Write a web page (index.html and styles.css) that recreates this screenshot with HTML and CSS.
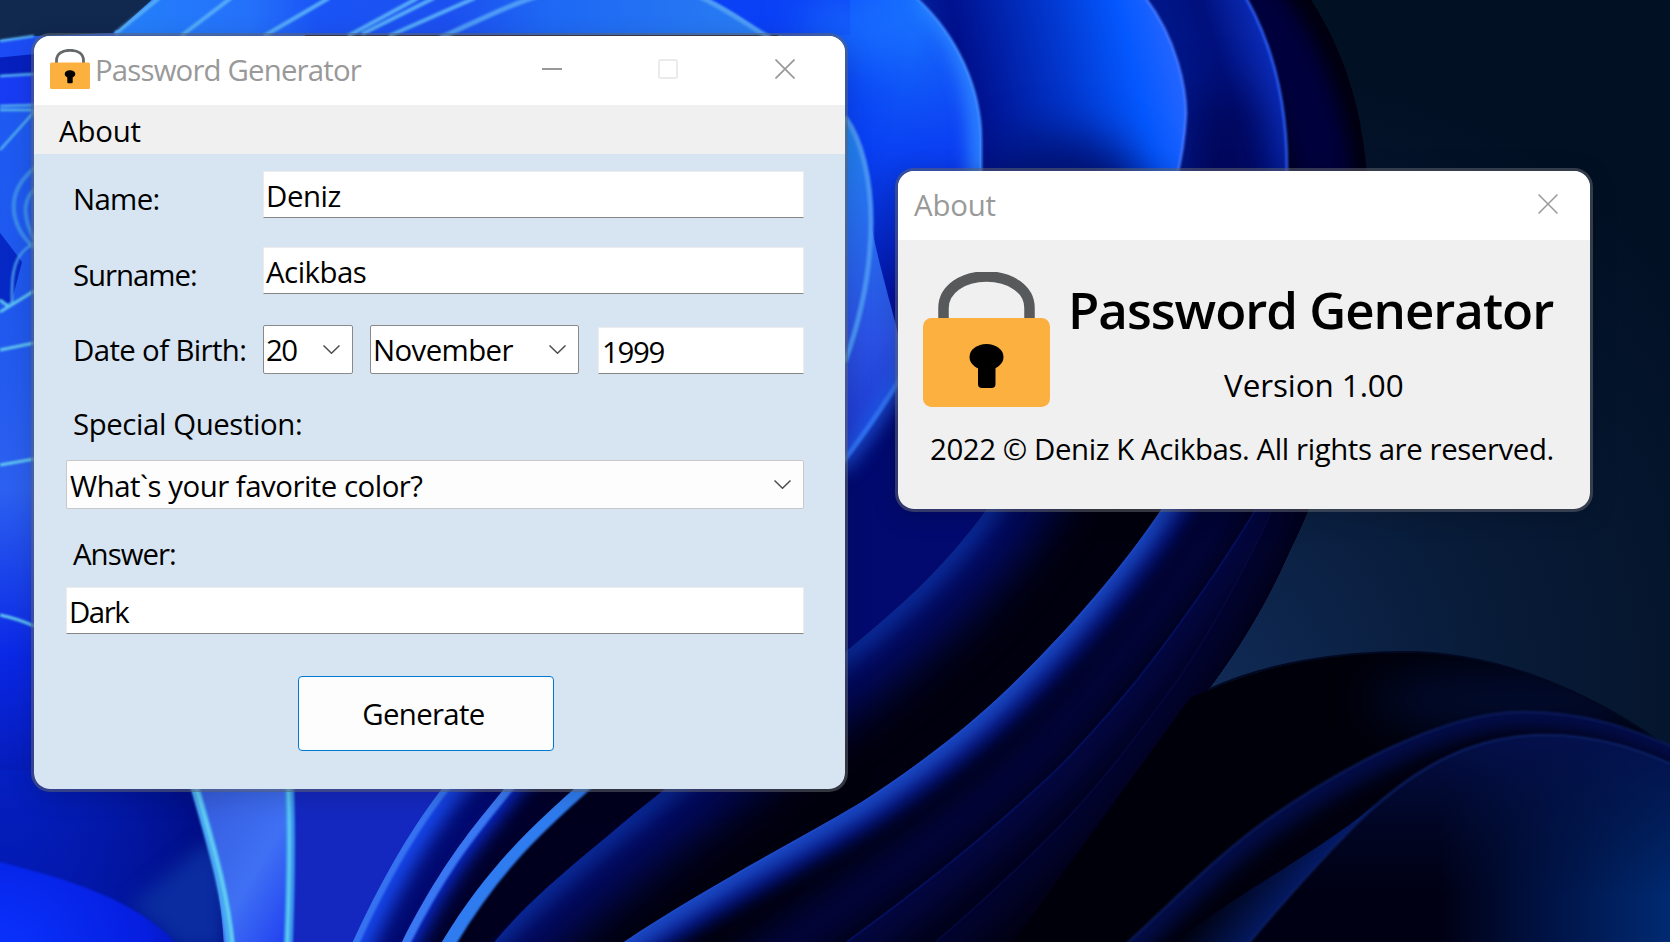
FILE: index.html
```html
<!DOCTYPE html>
<html lang="en">
<head>
<meta charset="utf-8">
<title>Password Generator</title>
<link rel="stylesheet" href="styles.css">
</head>
<body>
<main class="desktop">
  <svg class="wallpaper" viewBox="0 0 1670 942" preserveAspectRatio="none" aria-hidden="true">
    <defs>
      <filter id="b1" filterUnits="userSpaceOnUse" x="-200" y="-200" width="2100" height="1400" color-interpolation-filters="sRGB"><feGaussianBlur stdDeviation="1"/></filter>
      <filter id="b8" filterUnits="userSpaceOnUse" x="-200" y="-200" width="2100" height="1400" color-interpolation-filters="sRGB"><feGaussianBlur stdDeviation="9"/></filter>
      <filter id="b20" filterUnits="userSpaceOnUse" x="-200" y="-200" width="2100" height="1400" color-interpolation-filters="sRGB"><feGaussianBlur stdDeviation="22"/></filter>
      <radialGradient id="sky" gradientUnits="userSpaceOnUse" cx="1210" cy="680" r="620"><stop offset="0" stop-color="#102a55"/><stop offset=".45" stop-color="#081b38"/><stop offset="1" stop-color="#021024"/></radialGradient>
      <linearGradient id="gTop3" gradientUnits="userSpaceOnUse" x1="700" y1="0" x2="985" y2="60"><stop offset="0" stop-color="#0836f0"/><stop offset=".45" stop-color="#0a4cff"/><stop offset=".75" stop-color="#1a78ff"/><stop offset="1" stop-color="#1f6bff"/></linearGradient>
      <linearGradient id="gShade" x1="0" y1="0" x2="0" y2="1"><stop offset="0" stop-color="#0430ee" stop-opacity="0"/><stop offset=".4" stop-color="#0430ee" stop-opacity=".75"/><stop offset=".75" stop-color="#0212a0"/><stop offset="1" stop-color="#020870"/></linearGradient>
      <linearGradient id="gTop2" gradientUnits="userSpaceOnUse" x1="975" y1="110" x2="1187" y2="60"><stop offset="0" stop-color="#00108c"/><stop offset=".45" stop-color="#0238d0"/><stop offset=".75" stop-color="#0458ff"/><stop offset="1" stop-color="#2a68ff"/></linearGradient>
      <linearGradient id="gTop1" gradientUnits="userSpaceOnUse" x1="1160" y1="100" x2="1290" y2="60"><stop offset="0" stop-color="#001a90"/><stop offset=".5" stop-color="#00107c"/><stop offset=".85" stop-color="#0a2ab4"/><stop offset="1" stop-color="#1e4ce6"/></linearGradient>
      <linearGradient id="gP4" x1="0" y1="0" x2="0" y2="1"><stop offset="0" stop-color="#1c90e8"/><stop offset=".3" stop-color="#2672f0"/><stop offset=".6" stop-color="#2a52e4"/><stop offset="1" stop-color="#1426c0"/></linearGradient>
      <linearGradient id="gLeft" x1="0" y1="0" x2="0" y2="1"><stop offset="0" stop-color="#1e5cf4"/><stop offset=".3" stop-color="#1f58ee"/><stop offset=".5" stop-color="#2c60f0"/><stop offset=".68" stop-color="#0a28e6"/><stop offset=".85" stop-color="#0418ac"/><stop offset="1" stop-color="#020c90"/></linearGradient>
      <linearGradient id="gCorner" gradientUnits="userSpaceOnUse" x1="20" y1="0" x2="230" y2="0"><stop offset="0" stop-color="#0422c8" stop-opacity=".5"/><stop offset="1" stop-color="#000a78"/></linearGradient>
      <radialGradient id="gDisk" gradientUnits="userSpaceOnUse" cx="0" cy="960" r="210"><stop offset="0" stop-color="#0a34ff"/><stop offset=".7" stop-color="#061ee0"/><stop offset="1" stop-color="#0414a8"/></radialGradient>
      <linearGradient id="gBandA" x1="0" y1="0" x2="1" y2="1"><stop offset="0" stop-color="#3458d8"/><stop offset=".6" stop-color="#3f70f4"/><stop offset="1" stop-color="#1e3cf0"/></linearGradient>
      <linearGradient id="gBandB" gradientUnits="userSpaceOnUse" x1="288" y1="0" x2="440" y2="60"><stop offset="0" stop-color="#2860dc"/><stop offset=".4" stop-color="#1c3cdc"/><stop offset="1" stop-color="#1428c0"/></linearGradient>
      <linearGradient id="gTopL" gradientUnits="userSpaceOnUse" x1="120" y1="0" x2="780" y2="0"><stop offset="0" stop-color="#2480fa"/><stop offset=".2" stop-color="#2470fa"/><stop offset=".3" stop-color="#1a54f6"/><stop offset=".5" stop-color="#1c50f0"/><stop offset=".65" stop-color="#1e68f4"/><stop offset="1" stop-color="#2a7ef2"/></linearGradient>
      <linearGradient id="gRight" gradientUnits="userSpaceOnUse" x1="1440" y1="0" x2="1670" y2="0"><stop offset="0" stop-color="#000014"/><stop offset=".5" stop-color="#001448"/><stop offset="1" stop-color="#002a72"/></linearGradient>
      <linearGradient id="gFade" x1="0" y1="0" x2="0" y2="1"><stop offset="0" stop-color="#04104c" stop-opacity=".95"/><stop offset=".75" stop-color="#000c30" stop-opacity="0"/></linearGradient>
      <linearGradient id="gSliver" gradientUnits="userSpaceOnUse" x1="1225" y1="885" x2="1275" y2="925"><stop offset="0" stop-color="#000210"/><stop offset="1" stop-color="#041c6c"/></linearGradient>

      <path id="outer" d="M1311 0C1350 60 1368 130 1368 210C1368 340 1330 470 1290 550C1266 605 1238 650 1208 690L1010 960H-20V-20H1300Z"/>
      <path id="t1" d="M1245 -4C1276 50 1287 110 1287 170V330H840V-20H1240Z"/>
      <path id="t2" d="M1144 -4C1178 40 1186 90 1186 114Q1184 150 1176 180V330H840V-20H1140Z"/>
      <path id="t3" d="M914 -4C958 35 981 90 981 140V400H780V-20H900Z"/>
      <path id="p4" d="M845 117C862 140 871 180 871 222C876 255 890 300 900 342V520H780V60Z"/>
      <path id="e0" d="M912 360C890 395 868 430 838 468V960H1300V360Z"/>
      <path id="e1" d="M1080 370L1000 490C953 560 905 603 845 652C790 696 730 742 664 790C600 840 540 890 480 950L380 1100H1700V370Z"/>
      <path id="e2" d="M1230 370L1174 490C1130 560 1065 635 999 697C955 738 905 774 860 803C780 850 700 890 612 950L480 1100H1700V370Z"/>
      <path id="e3" d="M1310 370L1266 490C1235 545 1180 625 1136 680C1100 723 1070 757 1041 783C980 840 920 888 840 946L700 1100H1700V370Z"/>
      <path id="e4" d="M1330 370L1262 530C1220 615 1190 665 1147 720C1115 763 1085 800 1052 833C1010 875 970 912 925 950L800 1100H1700V370Z"/>
      <path id="s1" d="M449 780C420 815 385 870 349 950L330 1050H900V780Z"/>
      <path id="s2" d="M511 780C480 820 445 855 398 950L370 1050H900V780Z"/>
      <path id="s3" d="M584 780C545 815 490 860 437 950L400 1050H900V780Z"/>
      <path id="r0" d="M1190 698C1263 664 1335 652 1406 652C1500 652 1600 695 1680 757V960H1000Z"/>
      <path id="rA" d="M1700 760C1630 725 1580 712 1523 712C1440 712 1330 775 1263 823C1215 858 1180 895 1120 950L1000 1100H1900V860Z"/>
      <path id="rB" d="M1680 768C1640 750 1600 735 1544 735C1470 735 1410 770 1353 827C1315 866 1280 905 1243 950H1680Z"/>
      <clipPath id="c1"><use href="#e1"/></clipPath><clipPath id="c2"><use href="#e2"/></clipPath>
      <clipPath id="c3"><use href="#e3"/></clipPath><clipPath id="c4"><use href="#e4"/></clipPath>
      <clipPath id="cs1"><use href="#s1"/></clipPath><clipPath id="cs2"><use href="#s2"/></clipPath><clipPath id="cs3"><use href="#s3"/></clipPath>
      <clipPath id="cO"><use href="#outer"/></clipPath><clipPath id="cA"><use href="#rA"/></clipPath><clipPath id="cR"><use href="#r0"/></clipPath>
      <clipPath id="ct3"><use href="#t3"/></clipPath><clipPath id="ct2"><use href="#t2"/></clipPath><clipPath id="ct1"><use href="#t1"/></clipPath>
    </defs>

    <rect width="1670" height="942" fill="url(#sky)"/>
    <!-- outer flower silhouette -->
    <use href="#outer" fill="#00000f"/>
    <g clip-path="url(#cO)">
      <!-- upper right petals -->
      <path d="M1240 -10C1290 40 1320 120 1325 200" stroke="#00003c" stroke-width="60" fill="none" filter="url(#b8)"/>
      <use href="#t1" fill="url(#gTop1)"/>
      <g clip-path="url(#ct1)"><ellipse cx="1225" cy="165" rx="34" ry="80" fill="#000658" filter="url(#b20)"/></g>
      <use href="#t1" fill="none" stroke="#2c5cf0" stroke-width="2.5" filter="url(#b1)"/>
      <use href="#t2" fill="url(#gTop2)"/>
      <g clip-path="url(#ct2)"><ellipse cx="1060" cy="195" rx="85" ry="60" fill="#001478" filter="url(#b20)"/></g>
      <use href="#t2" fill="none" stroke="#4478ff" stroke-width="2.5" filter="url(#b1)"/>
      <use href="#t3" fill="url(#gTop3)"/>
      <use href="#t3" fill="url(#gShade)"/>
      <g clip-path="url(#ct3)"><path d="M925 -4C966 35 985 90 980 180" stroke="#2f86ff" stroke-width="22" fill="none" filter="url(#b8)"/></g>
      <use href="#t3" fill="none" stroke="#3f8cff" stroke-width="2.5" filter="url(#b1)"/>

      <!-- lower sweeping petals -->
      <path d="M-10 340H920V960H-10Z" fill="#0414a0"/>
      <use href="#p4" fill="url(#gP4)"/>
      <path d="M845 117C862 140 871 180 871 222C871 270 860 320 845 362" stroke="#4a94f4" stroke-width="5" fill="none" filter="url(#b1)"/>
      <use href="#e0" fill="#020a70"/>
      <path d="M912 360C890 395 868 430 838 468" stroke="#1f5ae6" stroke-width="14" fill="none" filter="url(#b8)"/>
      <path d="M912 360C890 395 868 430 838 468" stroke="#2f6ff0" stroke-width="5" fill="none" filter="url(#b1)"/>
      <use href="#e1" fill="#00000e"/>
      <g clip-path="url(#c1)"><use href="#e1" fill="none" stroke="#020a62" stroke-width="110" filter="url(#b20)"/><use href="#e1" fill="none" stroke="#0a2a96" stroke-width="26" filter="url(#b8)"/></g>
      <use href="#e2" fill="#000008"/>
      <g clip-path="url(#c2)"><use href="#e2" fill="none" stroke="#04127c" stroke-width="60" filter="url(#b8)"/><use href="#e2" fill="none" stroke="#1c4cc8" stroke-width="26" filter="url(#b8)"/><use href="#e2" fill="none" stroke="#2350c8" stroke-width="2" filter="url(#b1)"/></g>
      <g clip-path="url(#c2)"><path d="M1280 370L1235 490C1200 560 1110 675 1030 760C960 825 880 880 780 950L640 1060" fill="none" stroke="#010548" stroke-width="44" filter="url(#b20)"/></g>
      <use href="#e3" fill="#000016"/>
      <g clip-path="url(#c3)"><use href="#e3" fill="none" stroke="#03084c" stroke-width="46" filter="url(#b20)"/><use href="#e3" fill="none" stroke="#0a1878" stroke-width="2" filter="url(#b1)"/></g>
      <use href="#e4" fill="#000010"/>
      <g clip-path="url(#c4)"><use href="#e4" fill="none" stroke="#030436" stroke-width="50" filter="url(#b20)"/><use href="#e4" fill="none" stroke="#080e4c" stroke-width="2" filter="url(#b1)"/></g>
    </g>
    <!-- right dark petals -->
    <use href="#r0" fill="#00000a"/>
    <g clip-path="url(#cR)"><ellipse cx="1520" cy="700" rx="150" ry="34" fill="#010a2c" filter="url(#b20)"/></g>
    <path d="M1208 690C1263 664 1335 652 1406 652C1500 652 1600 695 1680 757" fill="none" stroke="#020820" stroke-width="2"/>
    <use href="#rA" fill="#00000e"/>
    <g clip-path="url(#cA)"><use href="#rA" fill="none" stroke="#020c48" stroke-width="34" filter="url(#b8)"/></g>
    <path d="M1700 760C1630 725 1580 712 1523 712C1440 712 1330 775 1263 823C1215 858 1180 895 1120 950" fill="none" stroke="#0a1a58" stroke-width="2.5" filter="url(#b1)"/>
    <path d="M1375 805C1310 858 1240 890 1165 950H1260Z" fill="url(#gSliver)"/>
    <use href="#rB" fill="url(#gRight)"/>
    <use href="#rB" fill="url(#gFade)"/>
    <path d="M1680 768C1640 750 1600 735 1544 735C1470 735 1410 770 1353 827C1315 866 1280 905 1243 950" fill="none" stroke="#0b1e60" stroke-width="2.5" filter="url(#b1)"/>

    <!-- petals below the main window -->
    <rect x="-5" y="30" width="310" height="920" fill="url(#gLeft)"/>
    <rect x="-5" y="770" width="320" height="180" fill="url(#gCorner)"/>
    <path d="M130 905L208 840L225 870V950H180Z" fill="#0a2ca0" filter="url(#b8)"/>
    <path d="M0 862C70 880 140 900 182 950H-10V862Z" fill="url(#gDisk)" filter="url(#b1)"/>
    <path d="M188 780C205 830 222 880 224 950H290V780Z" fill="url(#gBandA)"/>
    <path d="M288 780C292 840 288 900 286 950H370L470 780Z" fill="url(#gBandB)"/>
    <path d="M193 780C210 840 226 890 231 950" fill="none" stroke="#48a8f4" stroke-width="9" filter="url(#b1)"/>
    <path d="M194 780C211 840 228 890 233 950" fill="none" stroke="#66d0f0" stroke-width="3" filter="url(#b1)"/>
    <path d="M289 780C292 840 290 900 288 950" fill="none" stroke="#3a98ee" stroke-width="9" filter="url(#b1)"/>
    <path d="M288 780C291 840 289 900 287 950" fill="none" stroke="#62ccf0" stroke-width="3" filter="url(#b1)"/>
    <g clip-path="url(#cs1)"><path d="M440 770H680C610 842 540 880 480 960H340Z" fill="#020a70"/><path d="M470 760L449 780C420 815 385 870 349 950L335 990" fill="none" stroke="#1646ea" stroke-width="40" filter="url(#b8)"/><path d="M452 780C423 815 388 870 352 950" fill="none" stroke="#3672f0" stroke-width="8" filter="url(#b1)"/></g>
    <g clip-path="url(#cs2)"><path d="M500 770H680C610 842 540 880 480 960H390Z" fill="#00002c"/><path d="M530 760L511 780C480 820 445 855 398 950L380 990" fill="none" stroke="#0a2cd8" stroke-width="30" filter="url(#b8)"/><path d="M514 780C483 820 448 855 401 950" fill="none" stroke="#3a78f2" stroke-width="11" filter="url(#b1)"/></g>
    <g clip-path="url(#cs3)"><path d="M570 780H676C610 832 545 885 474 956H430Z" fill="#00001e"/><path d="M588 780C549 815 494 860 443 950" fill="none" stroke="#2f7cf0" stroke-width="17" filter="url(#b1)"/></g>

    <!-- left edge folds -->
    <path d="M-5 -5H157L113 33L34 36L0 40L-5 45Z" fill="#11284f"/>
    <path d="M-5 42L35 36V74L-5 77Z" fill="#1c4cf6"/><path d="M-5 58L35 54V74L-5 76Z" fill="#0620c0"/>
    <path d="M-5 76L35 74V106L-5 107Z" fill="#183cf4"/>
    <path d="M-5 226L22 262L12 300L5 305L-5 292Z" fill="#0628c4"/>
    <g fill="none" stroke="#56b4f0" stroke-width="2.500" filter="url(#b1)">
      <path d="M0 41L34 36M0 76L34 74M0 106L34 105M0 110H34M0 150L34 112"/>
      <path d="M40 164C20 178 12 195 14 212C16 228 24 238 34 248M40 186C28 192 24 204 26 216C28 228 32 236 36 242" stroke="#3c8cec" stroke-width="4"/>
      <path d="M36 242C20 250 12 262 12 290V304" stroke="#4aa0f0"/>
      <path d="M0 312L34 291M0 300L8 306M0 350L34 343M0 465L34 459M0 615C15 618 25 622 34 626" stroke="#62c8f0" stroke-width="3"/>
    </g>

    <!-- strip above the main window -->
    <path d="M157 -5L113 35H770L724 -5Z" fill="url(#gTopL)"/>
    <path d="M700 -5C735 12 750 24 766 35H850V-5Z" fill="#0a40f6"/>
    <path d="M810 -5H925L905 60H800Z" fill="#1f7cff" filter="url(#b20)" opacity=".5"/>
    <g fill="none" stroke="#56acf8" stroke-width="4" filter="url(#b1)">
      <path d="M159 -2L115 34M231 -2L181 36M329 -2L264 36M418 -2L348 36M434 -2L362 34M475 -2L389 36"/>
      <path d="M440 38C480 20 510 4 545 -6M690 -8C730 10 745 24 770 38" stroke="#4e9cf6" stroke-width="5"/>
    </g>
  </svg>

  <section class="window window-main">
    <header class="titlebar">
      <svg class="app-icon" viewBox="0 0 40 40" aria-hidden="true">
        <path d="M6.500 15V11.500C6.500 5 12 1.300 20 1.300S33.500 5 33.500 11.500V15" fill="none" stroke="#65686a" stroke-width="2.800"/>
        <rect y="13.500" width="40" height="26.500" rx="1.500" fill="#fbb040"/>
        <ellipse cx="20" cy="25" rx="5.300" ry="3.800"/><rect x="17.300" y="26" width="5.400" height="8.300" rx="1"/>
      </svg>
      <h1 class="title t-title">Password Generator</h1>
      <div class="controls">
        <svg class="ctl" viewBox="0 0 20 20"><path d="M0 10H20" stroke="#999" stroke-width="2"/></svg>
        <svg class="ctl" viewBox="0 0 20 20"><rect x="1" y="1" width="18" height="18" rx="1.500" fill="none" stroke="#ebebeb" stroke-width="2"/></svg>
        <svg class="ctl" viewBox="0 0 20 20"><path d="M.5 .5L19.500 19.500M19.500 .5L.5 19.500" stroke="#999" stroke-width="1.700"/></svg>
      </div>
    </header>
    <nav class="menubar"><span class="t-about">About</span></nav>
    <form class="form">
      <div class="row row-name"><label class="t-name">Name:</label><div class="textbox t-deniz">Deniz</div></div>
      <div class="row row-surname"><label class="t-surname">Surname:</label><div class="textbox t-acikbas">Acikbas</div></div>
      <div class="row row-birth">
        <label class="t-dob">Date of Birth:</label>
        <div class="combo combo-day t-day">20<svg class="chev" viewBox="0 0 17 9"><path d="M.5 .5L8.500 8.200L16.500 .5"/></svg></div>
        <div class="combo combo-month t-month">November<svg class="chev" viewBox="0 0 17 9"><path d="M.5 .5L8.500 8.200L16.500 .5"/></svg></div>
        <div class="textbox textbox-year t-year">1999</div>
      </div>
      <label class="line-label t-question">Special Question:</label>
      <div class="combo combo-question"><span class="t-what">What`s your favorite color?</span><svg class="chev" viewBox="0 0 17 9"><path d="M.5 .5L8.500 8.200L16.500 .5"/></svg></div>
      <label class="line-label answer-label t-answer">Answer:</label>
      <div class="textbox textbox-answer t-dark">Dark</div>
      <button type="button" class="generate t-generate">Generate</button>
    </form>
  </section>

  <section class="window window-about">
    <header class="titlebar">
      <h2 class="title t-about">About</h2>
      <div class="controls"><svg class="ctl" viewBox="0 0 20 20"><path d="M.5 .5L19.500 19.500M19.500 .5L.5 19.500" stroke="#999" stroke-width="1.500"/></svg></div>
    </header>
    <div class="about-body">
      <div class="about-top">
        <svg class="lock" viewBox="0 0 127 135" aria-hidden="true">
          <path d="M20.500 48V36C20.500 17 40 4.500 63.500 4.500S106.500 17 106.500 36V48" fill="none" stroke="#58595b" stroke-width="10.500"/>
          <rect y="46" width="127" height="89" rx="8.500" fill="#fbb040"/>
          <ellipse cx="63.500" cy="85" rx="17" ry="13"/><rect x="55" y="88" width="17.500" height="28" rx="4"/>
        </svg>
        <div class="about-text">
          <p class="product">Password Generator</p>
          <p class="version">Version 1.00</p>
        </div>
      </div>
      <p class="copyright">2022 © Deniz K Acikbas. All rights are reserved.</p>
    </div>
  </section>
</main>
</body>
</html>
```
FILE: styles.css
```css
* { box-sizing: border-box; }
body { margin: 0; overflow: hidden; font-family: "Open Sans", "Noto Sans", sans-serif; font-size: 29.4px; line-height: 40px; color: #000; }
h1, h2, p { margin: 0; font-weight: 400; font-size: inherit; }
.desktop { position: relative; width: 1670px; height: 942px; overflow: hidden; background: #030d20; }
.wallpaper { position: absolute; inset: 0; width: 100%; height: 100%; }

/* windows */
.window { position: absolute; border: 3px solid rgba(92, 96, 106, .55); border-radius: 19px; background-clip: padding-box; white-space: nowrap; box-shadow: 0 6px 26px rgba(0, 0, 0, .15); }
.window-main { left: 31px; top: 33px; width: 817px; height: 759px; background-color: #d7e4f1; }
.window-about { left: 895px; top: 168px; width: 698px; height: 344px; background-color: #f0f0f0; }
.titlebar { display: flex; align-items: center; height: 69px; padding: 0 50px 0 16px; background: #fff; border-radius: 16px 16px 0 0; color: #999; }
.window-about .titlebar { padding-right: 32px; }
.app-icon { width: 40px; height: 40px; margin-top: -3px; }
.title { padding-bottom: 2px; }
.window-main .title { padding-left: 5px; }
.controls { display: flex; gap: 96px; margin-left: auto; }
.window-main .controls { gap: 97px; }
.window-main .ctl:first-child { margin-right: -1px; }
.ctl { width: 20px; height: 20px; margin-top: -3px; }
.menubar { height: 49px; padding: 6px 25px; background: #f0f0f0; }

/* form */
.form { display: flex; flex-direction: column; padding: 17px 41px 0 32px; }
.row { display: flex; align-items: flex-start; height: 47px; }
.row label { flex: none; width: 197px; padding: 8px 0 0 7px; }
.row-surname { margin-top: 29px; }
.row-birth { margin-top: 31px; height: 49px; }
.row-birth label { padding-top: 5px; }
.textbox { flex: 1; height: 47px; padding: 1px 0 0 2px; line-height: 46px; background: #fff; border: 1px solid #ececec; border-bottom-color: #858585; }
.combo { display: flex; align-items: center; justify-content: space-between; height: 49px; padding: 0 12px 0 2px; line-height: 48px; background: #fff; border: 1px solid #8a8a8a; border-radius: 2px; }
.chev { width: 17px; height: 9px; fill: none; stroke: #4d4d4d; stroke-width: 1.5; }
.combo-day { width: 90px; }
.combo-month { width: 209px; margin-left: 17px; padding-left: 2px; }
.textbox-year { margin: 2px 0 0 19px; padding-left: 3px; }
.line-label { padding: 30px 0 0 7px; }
.combo-question { margin-top: 16px; padding-left: 3px; background: #fdfdfd; border-color: #c9c9c9; }
.combo-question span { padding-top: 2px; }
.answer-label { padding: 25px 0 0 7px; }
.textbox-answer { flex: none; margin-top: 13px; }
.generate { width: 256px; height: 75px; margin: 42px 0 0 232px; padding: 1px 5px 0 0; border: 1px solid #0078d4; border-radius: 4px; background: #fdfdfd; color: #000; font: inherit; }

/* about window */
.about-body { padding: 32px 34px 0 25px; }
.about-top { display: flex; gap: 18px; height: 135px; }
.lock { flex: none; width: 127px; height: 135px; }
.product { padding-top: 2px; font-size: 51px; font-weight: 600; line-height: 70px; letter-spacing: -1.01px; }
.version { padding: 19px 0 0 156px; font-size: 31.4px; line-height: 44px; letter-spacing: -.07px; }
.copyright { padding: 22px 0 0 7px; letter-spacing: -.41px; }

/* text tracking */
.t-title { letter-spacing: -.84px; }
.t-about { letter-spacing: -.2px; }
.t-name { letter-spacing: -.68px; }
.t-deniz { letter-spacing: -.45px; }
.t-surname { letter-spacing: -1.04px; }
.t-acikbas { letter-spacing: -.5px; }
.t-dob { letter-spacing: -.63px; }
.t-day { letter-spacing: -1.5px; }
.t-month { letter-spacing: -.61px; }
.t-year { letter-spacing: -1.3px; }
.t-question { letter-spacing: -.41px; }
.t-what { letter-spacing: -.5px; }
.t-answer { letter-spacing: -.99px; }
.t-dark { letter-spacing: -1.5px; }
.t-generate { letter-spacing: -.68px; }
```
